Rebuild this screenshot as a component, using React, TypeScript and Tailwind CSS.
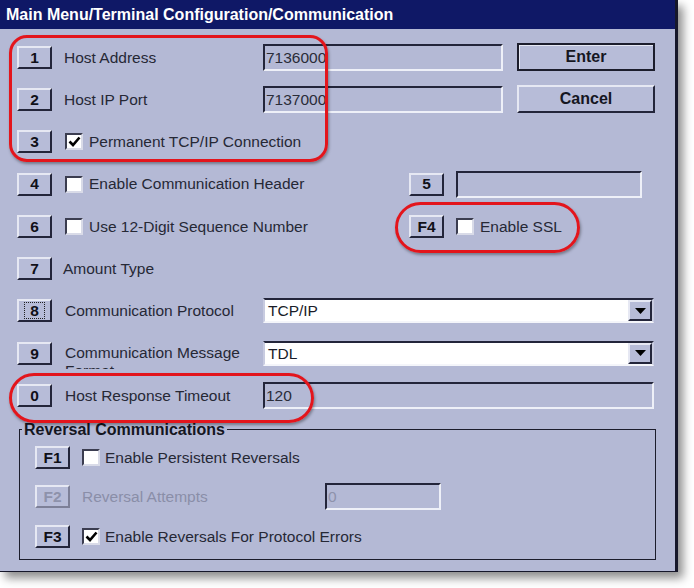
import { ReactNode } from 'react';

const font = "font-['Liberation_Sans',Arial,sans-serif]";

function Key({ label, disabled, focused }: { label: string; disabled?: boolean; focused?: boolean }) {
  return (
    <div
      className={`w-[35px] h-[23px] shrink-0 flex items-center justify-center bg-[#b7bcd8] border-2 border-t-[#e6e8f3] border-l-[#e6e8f3] font-bold text-[15.5px] ${
        disabled ? 'text-[#8e92ab] border-b-[#7d8098] border-r-[#7d8098]' : 'text-[#101018] border-b-[#23253a] border-r-[#23253a]'
      }`}
    >
      <span className={focused ? 'px-[5px] leading-[15px] border border-dotted border-[#222]' : ''}>{label}</span>
    </div>
  );
}

function Checkbox({ checked }: { checked?: boolean }) {
  return (
    <div className="w-[18px] h-[17px] shrink-0 bg-white border-2 border-t-[#3b3d50] border-l-[#3b3d50] border-b-[#d9dbe8] border-r-[#d9dbe8] flex items-center justify-center">
      {checked && (
        <svg width="13" height="11" viewBox="0 0 13 11">
          <path d="M1.5 5.5 L5 9 L11.5 1.5" fill="none" stroke="#000" strokeWidth="2.6" />
        </svg>
      )}
    </div>
  );
}

function Field({ value, w, gray }: { value?: string; w: string; gray?: boolean }) {
  return (
    <div
      className={`${w} h-[27px] shrink-0 flex items-center pl-[1px] border-2 border-t-[#23253a] border-l-[#23253a] border-b-[#eef0f8] border-r-[#eef0f8] text-[15.5px] ${
        gray ? 'text-[#8e92ab]' : 'text-[#2a2c38]'
      }`}
    >
      {value}
    </div>
  );
}

function Select({ value }: { value: string }) {
  return (
    <div className="w-[391px] h-[25px] shrink-0 flex items-center justify-between bg-white border-2 border-t-[#23253a] border-l-[#c8cbe0] border-b-[#f4f5fa] border-r-[#c8cbe0] pl-[3px] text-[15.5px] text-[#1a1c28]">
      <span>{value}</span>
      <div className="w-[24px] h-[21px] bg-[#b7bcd8] border-2 border-t-[#e6e8f3] border-l-[#e6e8f3] border-b-[#23253a] border-r-[#23253a] flex items-center justify-center">
        <svg width="11" height="6" viewBox="0 0 11 6">
          <path d="M0 0 H11 L5.5 6 Z" fill="#000" />
        </svg>
      </div>
    </div>
  );
}

function Row({ children }: { children: ReactNode }) {
  return <div className="h-[42.3px] flex items-center">{children}</div>;
}

function Label({ children, className = '', gray }: { children: ReactNode; className?: string; gray?: boolean }) {
  return (
    <div className={`text-[15.5px] whitespace-nowrap ${gray ? 'text-[#8a8ea8]' : 'text-[#262835]'} ${className}`}>
      {children}
    </div>
  );
}

export default function App() {
  return (
    <div className={`w-[694px] h-[588px] bg-white ${font}`}>
      <div className="relative w-[678px] h-[572px] bg-[#b4b9d5] border-r-[3px] border-b border-[#16172a] shadow-[5px_6px_9px_rgba(0,0,0,0.45)] flex flex-col overflow-hidden">
        <div className="h-[29px] shrink-0 bg-[#0f1866] flex items-center pl-[6px] text-white font-bold text-[16px]">
          Main Menu/Terminal Configuration/Communication
        </div>

        <div className="flex flex-col pl-[17px] pt-[7px]">
          <Row>
            <Key label="1" />
            <Label className="w-[211px] pl-[12px]">Host Address</Label>
            <Field w="w-[240px]" value="7136000" />
            <button className="ml-[14px] w-[138px] h-[28px] border-2 border-[#1c1d2c] bg-[#b7bcd8] font-bold text-[16px] text-[#15161f] shadow-[inset_1px_1px_0_#e6e8f3]">
              Enter
            </button>
          </Row>
          <Row>
            <Key label="2" />
            <Label className="w-[211px] pl-[12px]">Host IP Port</Label>
            <Field w="w-[240px]" value="7137000" />
            <button className="ml-[14px] w-[138px] h-[28px] border-2 border-t-[#e6e8f3] border-l-[#e6e8f3] border-b-[#23253a] border-r-[#23253a] bg-[#b7bcd8] font-bold text-[16px] text-[#15161f]">
              Cancel
            </button>
          </Row>
          <Row>
            <Key label="3" />
            <div className="ml-[13px] flex items-center gap-[6px]">
              <Checkbox checked />
              <Label>Permanent TCP/IP Connection</Label>
            </div>
          </Row>
          <Row>
            <Key label="4" />
            <div className="w-[357px] pl-[13px] flex items-center gap-[6px]">
              <Checkbox />
              <Label>Enable Communication Header</Label>
            </div>
            <Key label="5" />
            <div className="ml-[12px]">
              <Field w="w-[186px]" />
            </div>
          </Row>
          <Row>
            <Key label="6" />
            <div className="w-[357px] pl-[13px] flex items-center gap-[6px]">
              <Checkbox />
              <Label>Use 12-Digit Sequence Number</Label>
            </div>
            <Key label="F4" />
            <div className="ml-[12px] flex items-center gap-[6px]">
              <Checkbox />
              <Label>Enable SSL</Label>
            </div>
          </Row>
          <Row>
            <Key label="7" />
            <Label className="ml-[11px]">Amount Type</Label>
          </Row>
          <Row>
            <Key label="8" focused />
            <Label className="w-[211px] pl-[13px]">Communication Protocol</Label>
            <Select value="TCP/IP" />
          </Row>
          <Row>
            <Key label="9" />
            <div className="w-[211px] pl-[13px] h-[25px] mt-[12px] overflow-hidden self-start">
              <div className="text-[15.5px] leading-[18px] text-[#262835]">
                Communication Message
                <br />
                Format
              </div>
            </div>
            <Select value="TDL" />
          </Row>
          <Row>
            <Key label="0" />
            <Label className="w-[211px] pl-[13px]">Host Response Timeout</Label>
            <Field w="w-[391px]" value="120" />
          </Row>

          <fieldset className="ml-[2px] mt-[4px] w-[637px] border-[1.5px] border-[#1c1d2c]">
            <legend className="ml-[2px] px-[2px] font-bold text-[16px] leading-[18px] text-[#15161f]">
              Reversal Communications
            </legend>
            <div className="pl-[15px] pb-[3px] -mt-[1px]">
              <div className="h-[39.5px] flex items-center">
                <Key label="F1" />
                <div className="ml-[12px] flex items-center gap-[5px]">
                  <Checkbox />
                  <Label>Enable Persistent Reversals</Label>
                </div>
              </div>
              <div className="h-[39.5px] flex items-center">
                <Key label="F2" disabled />
                <Label gray className="w-[255px] pl-[12px]">Reversal Attempts</Label>
                <Field w="w-[116px]" value="0" gray />
              </div>
              <div className="h-[39.5px] flex items-center">
                <Key label="F3" />
                <div className="ml-[12px] flex items-center gap-[5px]">
                  <Checkbox checked />
                  <Label>Enable Reversals For Protocol Errors</Label>
                </div>
              </div>
            </div>
          </fieldset>
        </div>

        {/* red annotation marks */}
        <div className="absolute left-[9px] top-[35px] w-[319px] h-[127px] rounded-[18px] border-[3.5px] border-[#e3151c] shadow-[1px_2px_3px_rgba(0,0,0,0.35)]" />
        <div className="absolute left-[395px] top-[202px] w-[185px] h-[51px] rounded-full border-[3.5px] border-[#e3151c] shadow-[1px_2px_3px_rgba(0,0,0,0.35)]" />
        <div className="absolute left-[9px] top-[373px] w-[305px] h-[50px] rounded-full border-[3.5px] border-[#e3151c] shadow-[1px_2px_3px_rgba(0,0,0,0.35)]" />
      </div>
    </div>
  );
}
